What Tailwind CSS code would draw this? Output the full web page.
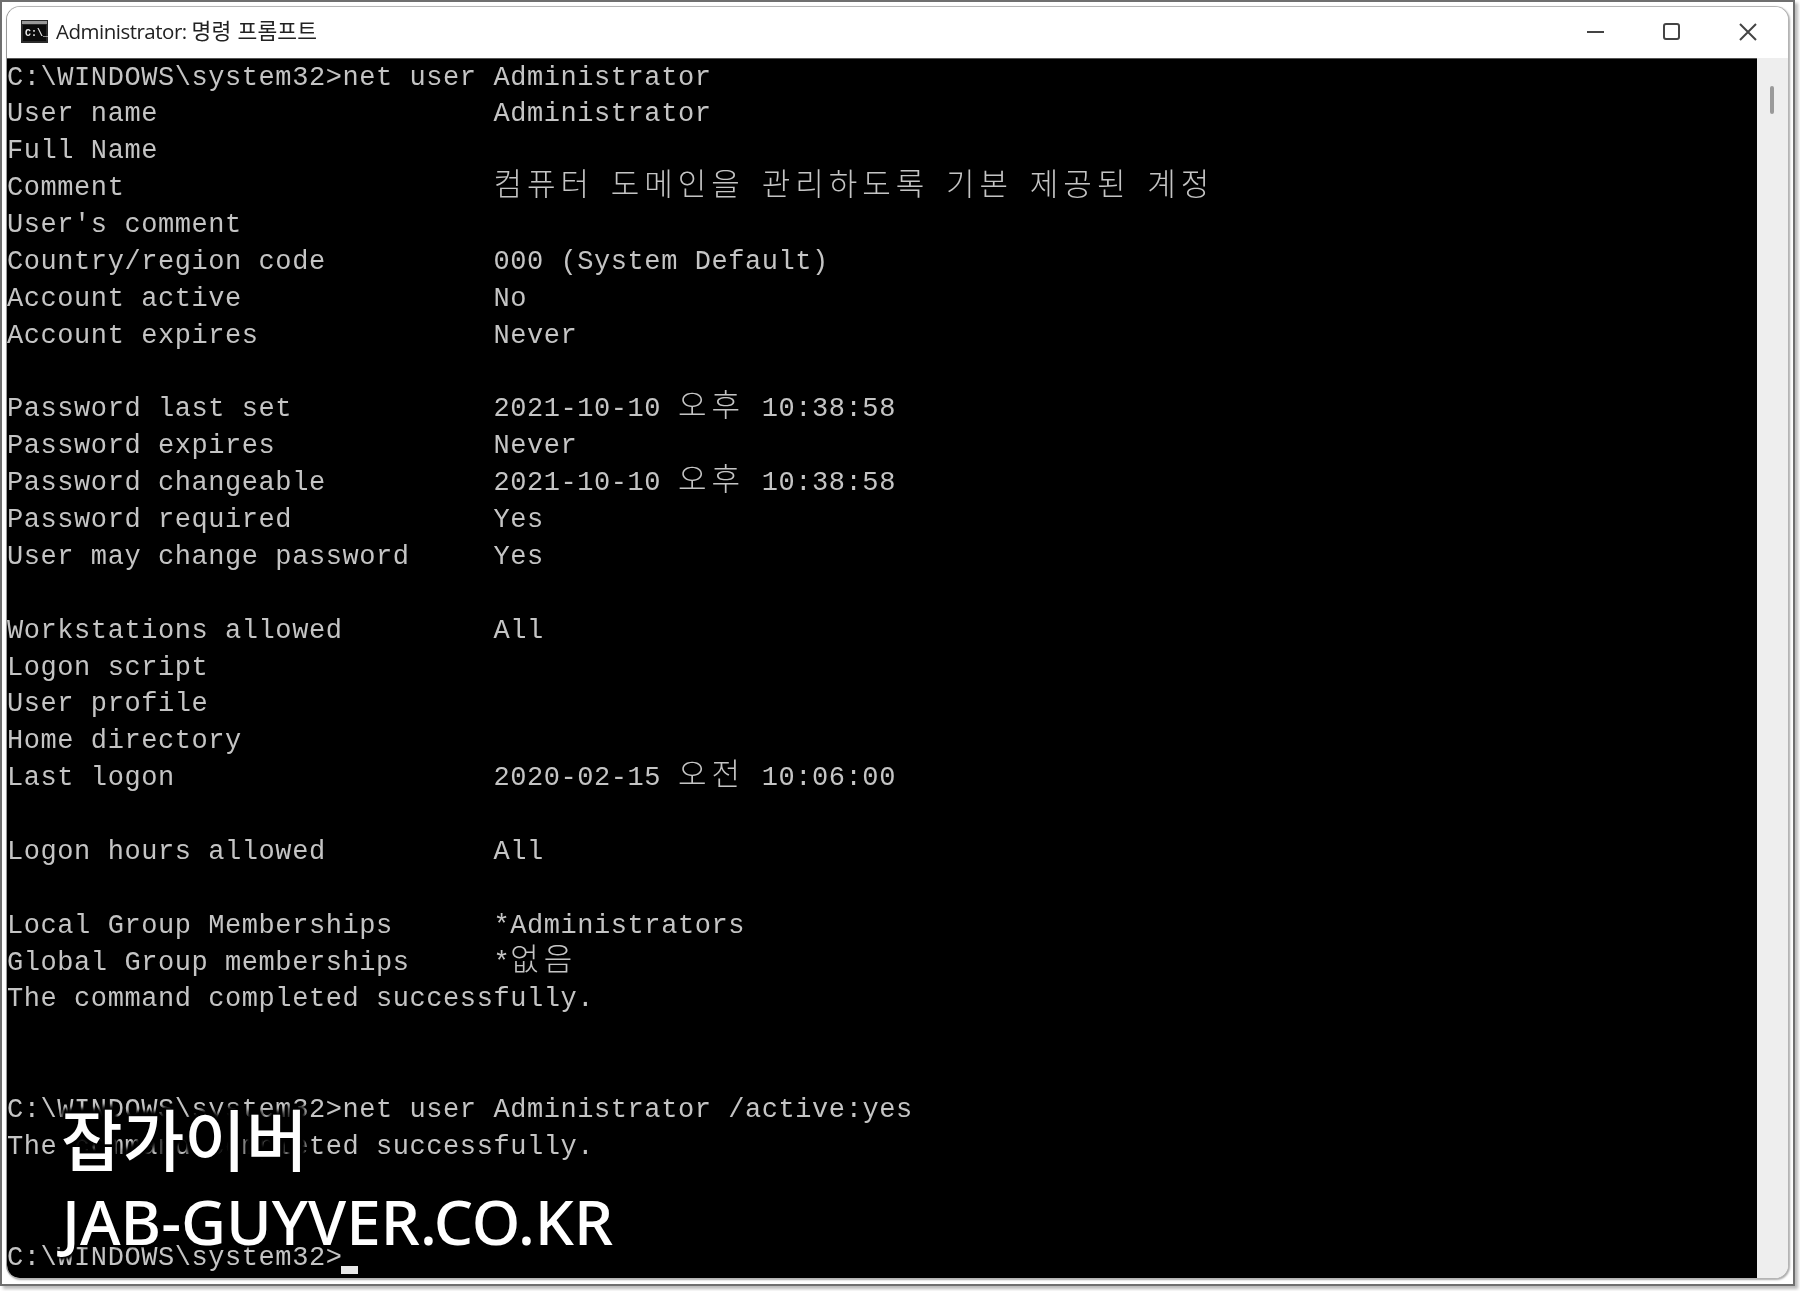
<!DOCTYPE html>
<html lang="ko">
<head>
  <meta charset="UTF-8" />
  <title>Administrator: 명령 프롬프트</title>
  <script src="https://cdn.jsdelivr.net/npm/@tailwindcss/browser@4"></script>
</head>
<body class="bg-white h-[1291px] overflow-hidden">
  <!-- outer capture frame -->
  <div class="w-[1795px] h-[1286px] border-2 border-[#6f6f6f] shadow-[3px_3px_3px_#bbb] pt-[4px] pl-[4px]">
    <!-- window -->
    <div class="relative w-[1783px] h-[1273px] flex flex-col rounded-[14px] border border-[#b4b4b4] border-l-[#999] overflow-hidden bg-white shadow-[1px_1px_2px_#aaa]">

      <!-- title bar -->
      <div class="h-[51px] shrink-0 flex items-center pb-[2px] bg-white blur-[0.4px]">
        <svg class="ml-[14px] w-[27px] h-[23px]" viewBox="0 0 27 23">
          <rect x="0" y="0" width="27" height="23" fill="#2b2b2b" />
          <rect x="1" y="1" width="25" height="3" fill="#9a9a9a" />
          <rect x="2" y="5" width="23" height="16" fill="#0c0c0c" />
          <text x="4" y="16" font-family="Liberation Mono" font-size="10" font-weight="700" fill="#eee">C:\_</text>
        </svg>
        <div class="ml-[8px] text-[20.5px] text-[#222] tracking-[-0.5px] font-['Open_Sans','Noto_Sans_CJK_KR',sans-serif]">Administrator: <span class="font-['Noto_Sans_CJK_KR'] text-[21.5px] leading-[0] tracking-[0.15px]">명령 프롬프트</span></div>
        <div class="ml-auto flex items-center pr-[31px] gap-[59px]">
          <svg class="w-[17px] h-[17px]" viewBox="0 0 17 17"><path d="M0 9h17" stroke="#444" stroke-width="2" fill="none" /></svg>
          <svg class="w-[17px] h-[17px]" viewBox="0 0 17 17"><rect x="1" y="1" width="15" height="15" rx="2" stroke="#444" stroke-width="2" fill="none" /></svg>
          <svg class="w-[18px] h-[18px]" viewBox="0 0 18 18"><path d="M1 1l16 16M17 1L1 17" stroke="#444" stroke-width="2" fill="none" /></svg>
        </div>
      </div>

      <div class="flex-1 flex min-h-0">
        <!-- console -->
        <div class="relative w-[1750px] h-full bg-black overflow-hidden border-t border-[#555] rounded-bl-[12px]">
          <div class="grid auto-rows-[36.875px] pt-[0.5px] text-[27px] leading-[36.875px] tracking-[0.57px] text-[#c4c4c4] whitespace-pre blur-[0.6px] font-['Liberation_Mono','Noto_Sans_CJK_KR',monospace]">
            <div>C:\WINDOWS\system32&gt;net user Administrator</div>
            <div>User name                    Administrator</div>
            <div>Full Name</div>
            <div>Comment                      <span class="font-['Noto_Sans_CJK_KR'] font-light text-[31px] leading-[0] tracking-[5px]">컴퓨터</span> <span class="font-['Noto_Sans_CJK_KR'] font-light text-[31px] leading-[0] tracking-[5px]">도메인을</span> <span class="font-['Noto_Sans_CJK_KR'] font-light text-[31px] leading-[0] tracking-[5px]">관리하도록</span> <span class="font-['Noto_Sans_CJK_KR'] font-light text-[31px] leading-[0] tracking-[5px]">기본</span> <span class="font-['Noto_Sans_CJK_KR'] font-light text-[31px] leading-[0] tracking-[5px]">제공된</span> <span class="font-['Noto_Sans_CJK_KR'] font-light text-[31px] leading-[0] tracking-[5px]">계정</span></div>
            <div>User's comment</div>
            <div>Country/region code          000 (System Default)</div>
            <div>Account active               No</div>
            <div>Account expires              Never</div>
            <div></div>
            <div>Password last set            2021-10-10 <span class="font-['Noto_Sans_CJK_KR'] font-light text-[31px] leading-[0] tracking-[5px]">오후</span> 10:38:58</div>
            <div>Password expires             Never</div>
            <div>Password changeable          2021-10-10 <span class="font-['Noto_Sans_CJK_KR'] font-light text-[31px] leading-[0] tracking-[5px]">오후</span> 10:38:58</div>
            <div>Password required            Yes</div>
            <div>User may change password     Yes</div>
            <div></div>
            <div>Workstations allowed         All</div>
            <div>Logon script</div>
            <div>User profile</div>
            <div>Home directory</div>
            <div>Last logon                   2020-02-15 <span class="font-['Noto_Sans_CJK_KR'] font-light text-[31px] leading-[0] tracking-[5px]">오전</span> 10:06:00</div>
            <div></div>
            <div>Logon hours allowed          All</div>
            <div></div>
            <div>Local Group Memberships      *Administrators</div>
            <div>Global Group memberships     *<span class="font-['Noto_Sans_CJK_KR'] font-light text-[31px] leading-[0] tracking-[5px]">없음</span></div>
            <div>The command completed successfully.</div>
            <div></div>
            <div></div>
            <div>C:\WINDOWS\system32&gt;net user Administrator /active:yes</div>
            <div>The command completed successfully.</div>
            <div></div>
            <div></div>
            <div class="flex items-start">C:\WINDOWS\system32&gt;<span class="mt-[26px] -ml-[1px] w-[17px] h-[8px] bg-[#e8e8e8]"></span></div>
          </div>

          <!-- watermark -->
          <div class="absolute left-[54px] top-[1040px] text-[67px] leading-[76px] text-white font-medium font-['Noto_Sans_CJK_KR',sans-serif] [text-shadow:0_0_5px_#000,0_0_5px_#000,0_0_5px_#000,0_0_5px_#000,0_0_5px_#000,4px_4px_4px_#000,-4px_-4px_4px_#000,4px_-4px_4px_#000,-4px_4px_4px_#000]">잡가이버</div>
          <div class="absolute left-[55px] top-[1124px] text-[62px] leading-[76px] text-white font-medium font-['Noto_Sans','Open_Sans',sans-serif] [text-shadow:0_0_3px_#000,0_0_3px_#000,0_0_3px_#000,2px_2px_3px_#000,-2px_-2px_3px_#000]">JAB-GUYVER.CO.KR</div>
        </div>

        <!-- scrollbar -->
        <div class="flex-1 bg-[#eeeeee] relative">
          <div class="absolute left-[13px] top-[28px] w-[4px] h-[28px] rounded-full bg-[#9a9a9a]"></div>
        </div>
      </div>
    </div>
  </div>
</body>
</html>
